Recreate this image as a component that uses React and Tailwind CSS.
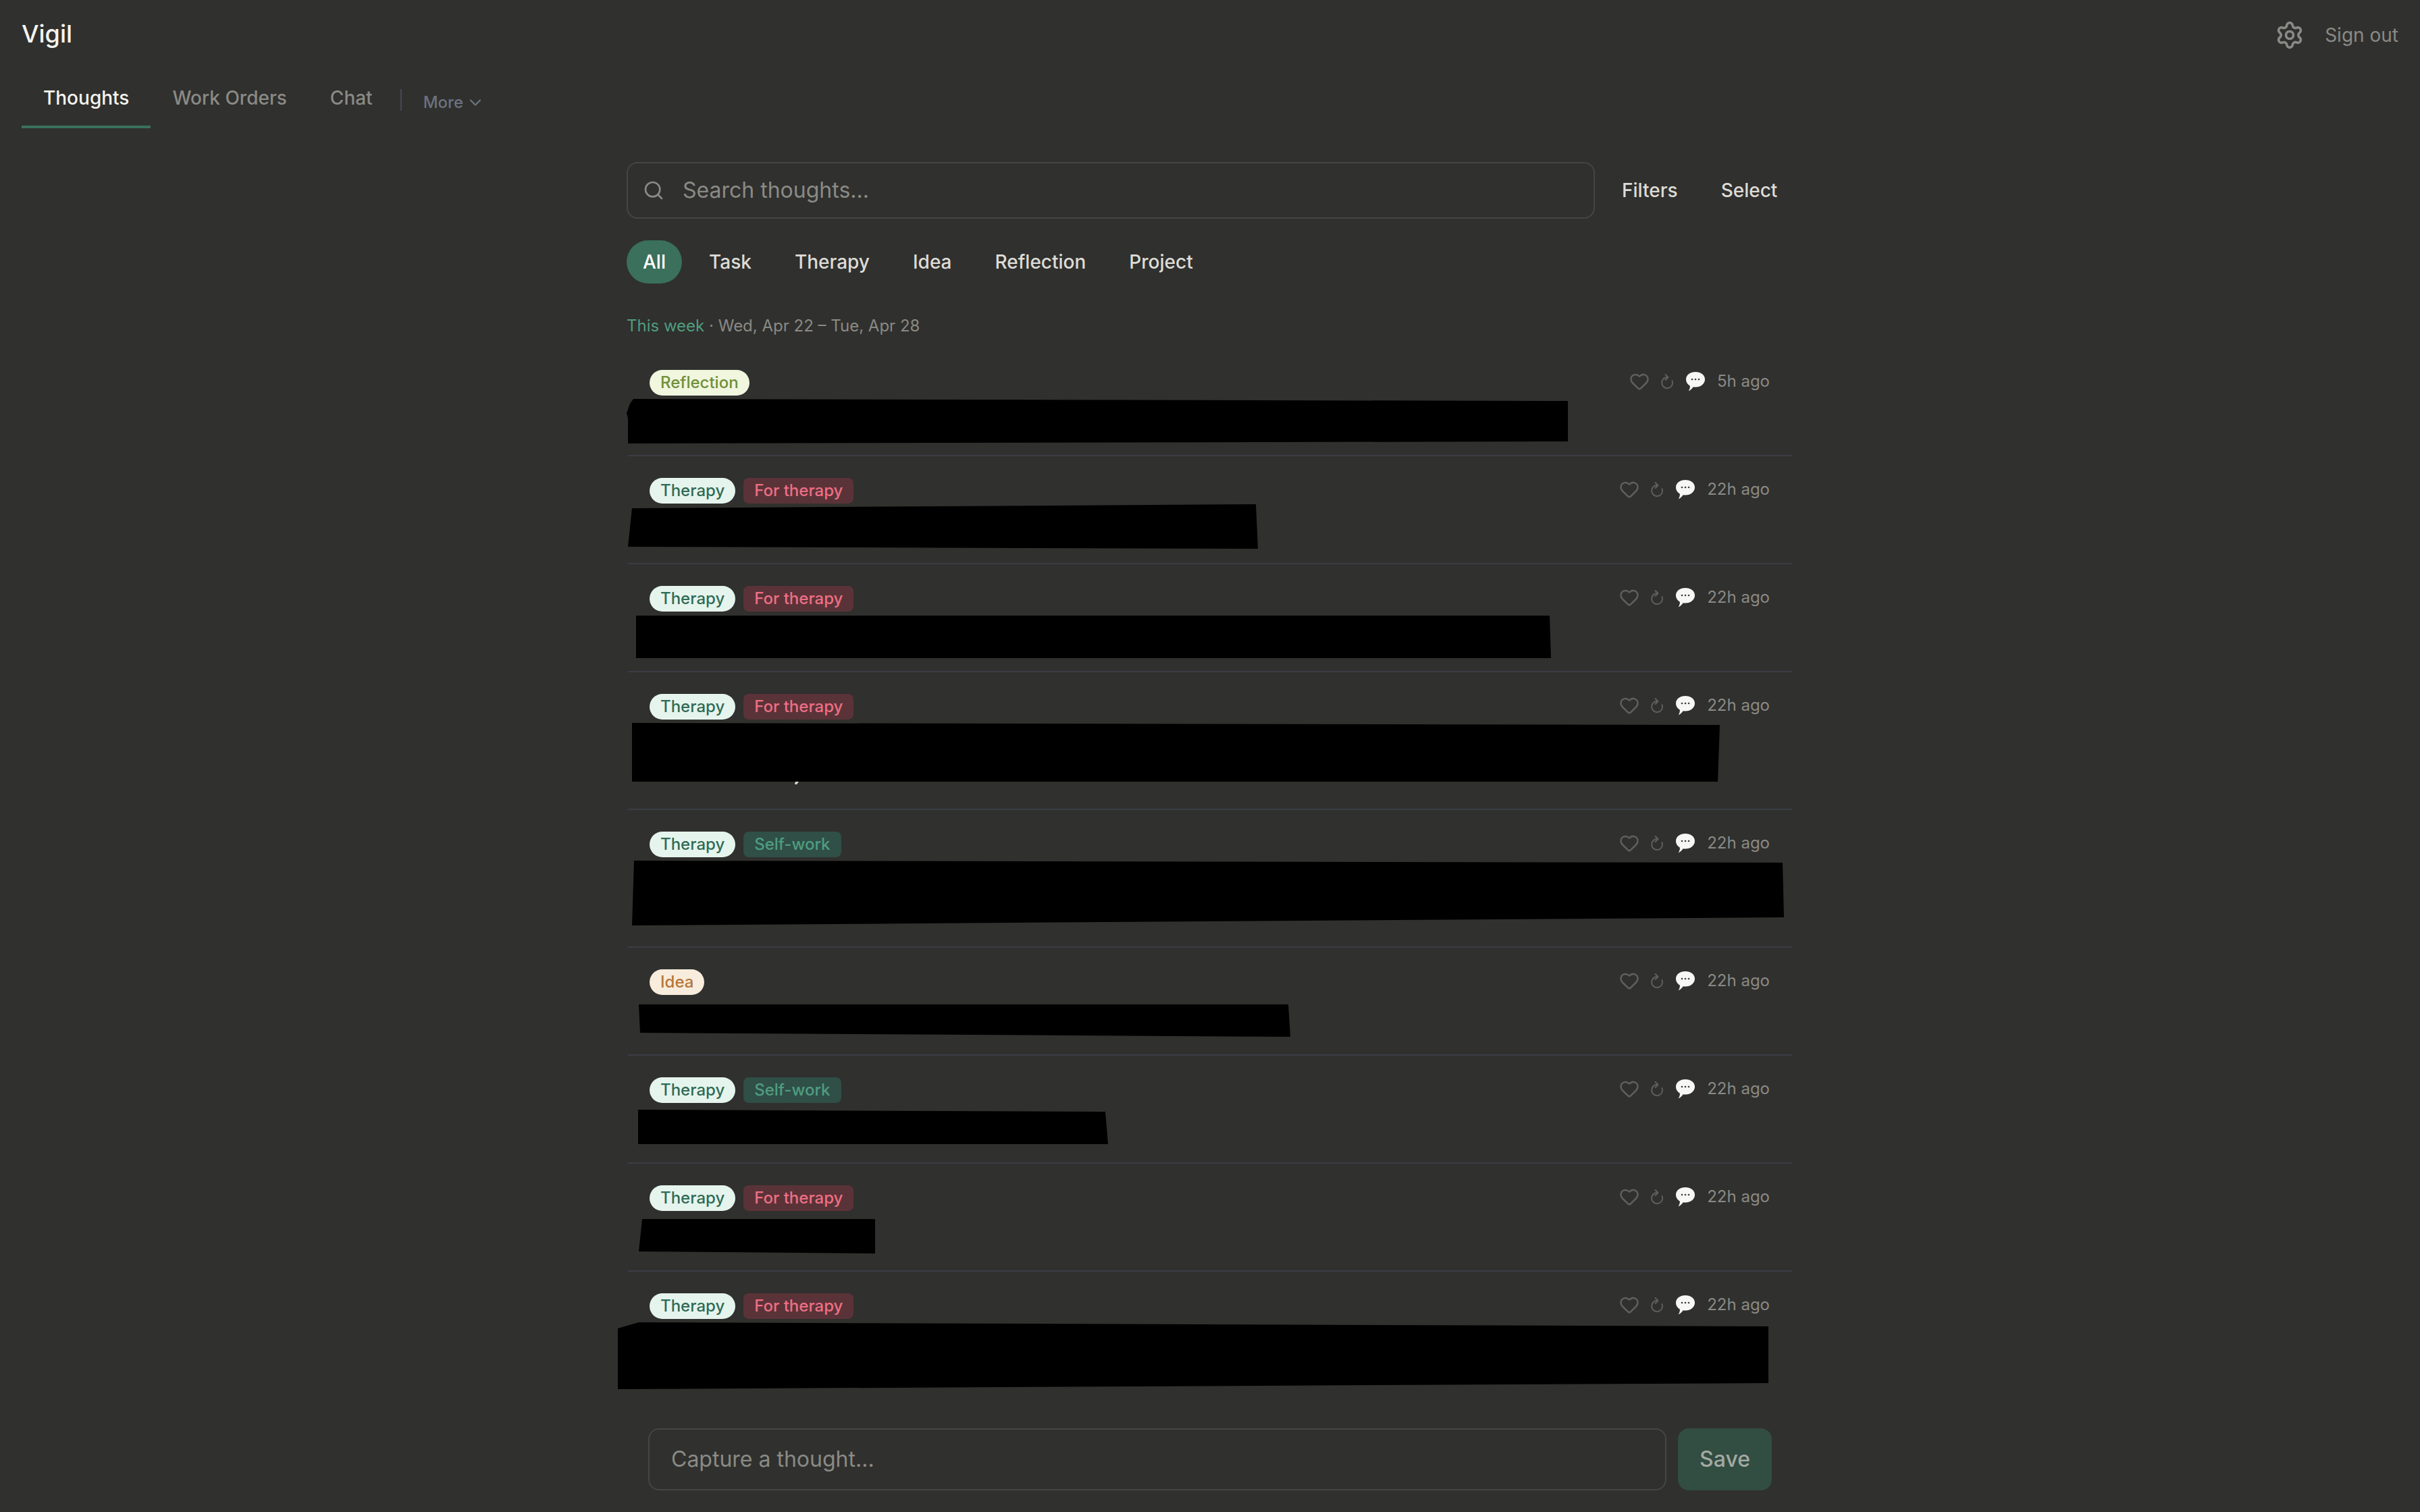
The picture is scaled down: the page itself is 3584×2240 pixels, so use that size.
import { ChevronDown, Heart, Search, Settings } from "lucide-react";

const font = "font-['Inter','Noto_Sans',sans-serif]";

const tagStyles = {
  Reflection: "bg-[#f1f6df] text-[#6f8f3a] rounded-full px-[16px]",
  Therapy: "bg-[#e6f4ee] text-[#2f6b55] rounded-full px-[16px]",
  Idea: "bg-[#f8ecdc] text-[#b5763a] rounded-full px-[16px]",
  "For therapy": "bg-[#5a3338] text-[#ee6f84] rounded-lg px-[16px]",
  "Self-work": "bg-[#2f4f47] text-[#4f9d80] rounded-lg px-[16px]",
};

// blacked out text in the reference, points are relative to the bottom left of the tags line
const thoughts = [
  { tags: ["Reflection"], time: "5h ago", h: "h-[160px]", box: [[8, 5], [1392, 8], [1392, 68], [0, 71], [0, 34], [-2, 26], [3, 12]] },
  { tags: ["Therapy", "For therapy"], time: "22h ago", h: "h-[160px]", box: [[6, 7], [930, 1], [933, 67], [0, 64]] },
  { tags: ["Therapy", "For therapy"], time: "22h ago", h: "h-[160px]", box: [[12, 6], [1365, 6], [1367, 69], [12, 69]] },
  { tags: ["Therapy", "For therapy"], time: "22h ago", h: "h-[204px]", box: [[6, 5], [1617, 8], [1614, 92], [6, 92]], speck: "248,92 253,92 250,96 247,96" },
  { tags: ["Therapy", "Self-work"], time: "22h ago", h: "h-[204px]", box: [[9, 5], [1710, 8], [1712, 89], [6, 101]] },
  { tags: ["Idea"], time: "22h ago", h: "h-[160px]", box: [[16, 14], [978, 14], [981, 62], [18, 56]] },
  { tags: ["Therapy", "Self-work"], time: "22h ago", h: "h-[160px]", box: [[15, 10], [707, 13], [711, 61], [15, 61]] },
  { tags: ["Therapy", "For therapy"], time: "22h ago", h: "h-[160px]", box: [[21, 12], [366, 12], [366, 63], [16, 60]] },
  { tags: ["Therapy", "For therapy"], time: "22h ago", h: "h-[232px]", last: true, box: [[16, 5], [1689, 11], [1689, 95], [-15, 104], [-15, 14]] },
];

function ChatBubble() {
  return (
    <svg width="30" height="30" viewBox="0 0 30 30">
      <path d="M15 1c7.700 0 14 4.300 14 11s-6.300 11.500-14 11.500c-1.200 0-2.300-.1-3.400-.3-1.500 2-4 5-7 6 1.400-2 2.400-4.500 2.300-7.500C3.300 19.600 1 16 1 12 1 5.300 7.300 1 15 1z" fill="#f7f7f5" />
      <circle cx="10" cy="12" r="1.300" fill="#3a3a38" />
      <circle cx="15" cy="12" r="1.300" fill="#3a3a38" />
      <circle cx="20" cy="12" r="1.300" fill="#3a3a38" />
    </svg>
  );
}

function RepeatIcon() {
  return (
    <svg width="24" height="24" viewBox="0 0 24 24" fill="none" stroke="#5f5f5c" strokeWidth="2" strokeLinecap="round" strokeLinejoin="round">
      <path d="M19.500 11A8 8 0 1 1 12 6" />
      <path d="M9.500 2 13.500 6l-4 4" />
    </svg>
  );
}

function Redaction({ points, speck }) {
  const xs = points.map((p) => p[0]);
  const ys = points.map((p) => p[1]);
  const left = Math.min(...xs);
  const top = Math.min(...ys);
  const width = Math.max(...xs) - left;
  const height = Math.max(...ys) - top;
  return (
    <svg
      width={width}
      height={height}
      viewBox={`${left} ${top} ${width} ${height}`}
      className="overflow-visible"
      style={{ marginLeft: left, marginTop: top }}
    >
      <polygon points={points.map((p) => p.join(",")).join(" ")} fill="#000" />
      {speck && <polygon points={speck} fill="#d8d8d2" />}
    </svg>
  );
}

function ThoughtRow({ thought }) {
  return (
    <div className={`${thought.h} ${thought.last ? "" : "border-b-2 border-[#3a3d44]"} pt-[32px] shrink-0`}>
      <div className="flex items-start justify-between pl-8 pr-[33px]">
        <div className="flex gap-3">
          {thought.tags.map((tag) => (
            <span key={tag} className={`h-[38px] text-[24px] leading-[38px] font-medium ${tagStyles[tag]}`}>
              {tag}
            </span>
          ))}
        </div>
        <div className="flex items-center h-[34px] text-[#8a8a85]">
          <Heart size={30} strokeWidth={2} className="text-[#5f5f5c]" />
          <div className="ml-[14px]"><RepeatIcon /></div>
          <div className="ml-[15px]"><ChatBubble /></div>
          <span className="ml-[17px] text-[24px]">{thought.time}</span>
        </div>
      </div>
      <Redaction points={thought.box} speck={thought.speck} />
    </div>
  );
}

export default function App() {
  return (
    <div className={`${font} w-full h-[2240px] overflow-hidden bg-[#30302e] text-[#f5f4ef] flex flex-col`}>
      <header className="flex items-center justify-between px-8 pt-[24px] h-[76px]">
        <span className="text-[36px] font-medium">Vigil</span>
        <div className="flex items-center gap-[30px] mt-1">
          <Settings size={44} strokeWidth={2} className="text-[#8a8a85]" />
          <button className="text-[28px] text-[#8a8a85]">Sign out</button>
        </div>
      </header>

      <nav className="flex items-stretch px-8 mt-[20px] h-[94px]">
        <a className="flex items-center px-8 pt-2 border-b-4 border-[#3a705c] text-[28px] font-medium">Thoughts</a>
        <a className="flex items-center px-8 pt-2 border-b-4 border-transparent text-[28px] font-medium text-[#8a8a85]">Work Orders</a>
        <a className="flex items-center px-8 pt-2 border-b-4 border-transparent text-[28px] font-medium text-[#8a8a85]">Chat</a>
        <div className="w-[2px] h-[32px] self-center mt-[10px] bg-[#444a54] ml-[9px]" />
        <a className="flex items-center gap-1 ml-[32px] pt-[22px] border-b-4 border-transparent text-[24px] font-medium text-[#6b7280]">
          More <ChevronDown size={28} strokeWidth={2} />
        </a>
      </nav>

      <main className="w-[1726px] ml-[928px] flex flex-col mt-[50px]">
        <div className="flex items-center">
          <div className="flex items-center w-[1434px] h-[84px] rounded-2xl border-2 border-[#454543] pl-[22px]">
            <Search size={32} strokeWidth={2} className="text-[#8a8a85]" />
            <span className="ml-[27px] text-[32px] text-[#8a8a85]">Search thoughts...</span>
          </div>
          <button className="ml-10 text-[28px] font-medium text-[#dddcd6]">Filters</button>
          <button className="ml-[64px] text-[28px] font-medium text-[#dddcd6]">Select</button>
        </div>

        <div className="flex items-center mt-[32px] h-[64px] text-[28px] font-medium text-[#dddcd6]">
          <span className="flex items-center justify-center w-[82px] h-full rounded-full bg-[#3a705c] text-white">All</span>
          <span className="ml-10">Task</span>
          <span className="ml-[64px]">Therapy</span>
          <span className="ml-[64px]">Idea</span>
          <span className="ml-[64px]">Reflection</span>
          <span className="ml-[64px]">Project</span>
        </div>

        <div className="mt-[45px] text-[24px] text-[#8a8a85]">
          <span className="text-[#4f9d80]">This week</span> · Wed, Apr 22 – Tue, Apr 28
        </div>

        <div className="flex flex-col mt-[15px] ml-[2px]">
          {thoughts.map((thought, i) => (
            <ThoughtRow key={i} thought={thought} />
          ))}
        </div>

        <div className="flex gap-[17px] ml-[32px]">
          <div className="flex items-center w-[1508px] h-[92px] rounded-2xl border-2 border-[#454543] px-8 text-[32px] text-[#8a8a85]">
            Capture a thought...
          </div>
          <button className="w-[139px] h-[92px] rounded-2xl bg-[#324d41] text-[32px] font-medium text-[#a3a9a3]">Save</button>
        </div>
      </main>
    </div>
  );
}
